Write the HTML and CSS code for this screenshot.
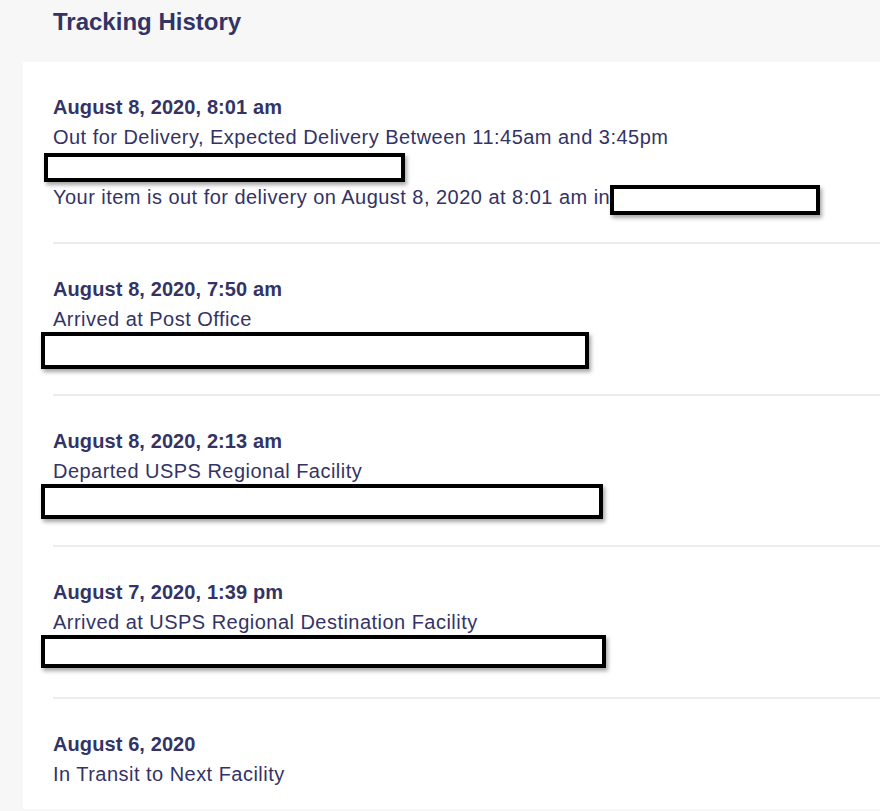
FILE: index.html
```html
<!DOCTYPE html>
<html lang="en">
<head>
  <meta charset="UTF-8">
  <meta name="viewport" content="width=device-width, initial-scale=1.0">
  <title>Tracking History</title>
  <link rel="stylesheet" href="styles.css">
</head>
<body>
  <h2 class="title">Tracking History</h2>

  <div class="history">
    <div class="event first">
      <div class="event-date">August 8, 2020, 8:01 am</div>
      <div class="event-status">Out for Delivery, Expected Delivery Between 11:45am and 3:45pm</div>
      <div class="redact redact-1"></div>
      <div class="event-status">Your item is out for delivery on August 8, 2020 at 8:01 am in<span class="redact redact-inline"></span></div>
    </div>

    <div class="event">
      <div class="event-date">August 8, 2020, 7:50 am</div>
      <div class="event-status">Arrived at Post Office</div>
      <div class="redact redact-2"></div>
    </div>

    <div class="event">
      <div class="event-date">August 8, 2020, 2:13 am</div>
      <div class="event-status">Departed USPS Regional Facility</div>
      <div class="redact redact-3"></div>
    </div>

    <div class="event">
      <div class="event-date">August 7, 2020, 1:39 pm</div>
      <div class="event-status">Arrived at USPS Regional Destination Facility</div>
      <div class="redact redact-4"></div>
    </div>

    <div class="event last">
      <div class="event-date">August 6, 2020</div>
      <div class="event-status">In Transit to Next Facility</div>
    </div>
  </div>
</body>
</html>
```

FILE: styles.css
```css
body {
  margin: 0;
  background-color: #f7f7f7;
  font-family: "Liberation Sans", Arial, sans-serif;
  color: #333366;
}
.title {
  margin: 0;
  padding: 10px 53px 0;
  height: 52px;
  font-size: 24px;
  line-height: 24px;
  font-weight: bold;
  color: #333366;
}
.history {
  margin-left: 23px;
  background-color: #fff;
}
.event {
  margin-left: 30px;
  padding: 30px 0 25px;
  border-bottom: 2px solid #ececec;
}
.event.first {
  padding-bottom: 27px;
}
.event.last {
  border-bottom: none;
  padding-bottom: 20px;
}
.event-date {
  font-size: 20px;
  line-height: 30px;
  font-weight: bold;
  letter-spacing: 0.1px;
}
.event-status {
  font-size: 20px;
  line-height: 30px;
  letter-spacing: 0.47px;
}
.redact {
  box-sizing: border-box;
  background-color: #fff;
  border: 4px solid #000;
  box-shadow: 2px 3px 4px rgba(0, 0, 0, 0.35);
}
.redact-1 {
  width: 361px;
  height: 29px;
  margin: 1px 0 0 -9px;
}
.redact-2 {
  width: 548px;
  height: 37px;
  margin: -2px 0 0 -12px;
}
.redact-3 {
  width: 562px;
  height: 35px;
  margin: -2px 0 1px -12px;
}
.redact-4 {
  width: 565px;
  height: 33px;
  margin: -2px 0 4px -12px;
}
.redact-inline {
  display: inline-block;
  width: 210px;
  height: 30px;
  vertical-align: -11px;
}
```
